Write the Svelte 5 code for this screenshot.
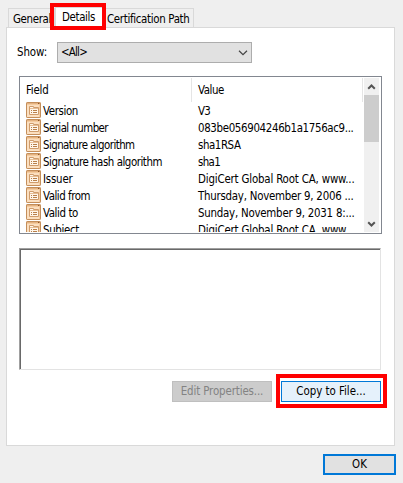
<script>
  const rows = [
    ['Version', 35, 'V3', 12],
    ['Serial number', 65, '083be056904246b1a1756ac9...', 155.5],
    ['Signature algorithm', 91.5, 'sha1RSA', 42.5],
    ['Signature hash algorithm', 119, 'sha1', 22],
    ['Issuer', 29.5, 'DigiCert Global Root CA, www...', 156.5],
    ['Valid from', 47, 'Thursday, November 9, 2006 ...', 155.5],
    ['Valid to', 35, 'Sunday, November 9, 2031 8:...', 156.5],
    ['Subject', 36, 'DigiCert Global Root CA, www...', 156.5]
  ];

  // Tracks a label so that it fills the given width.
  function fit(node, width) {
    node.style.letterSpacing = '0px';
    const natural = node.getBoundingClientRect().width;
    node.style.letterSpacing = (width - natural) / node.textContent.length + 'px';
  }
</script>

<main>
  <nav>
    <button class="tab general"><span use:fit={38}>General</span></button>
    <button class="tab active"><span use:fit={33}>Details</span><i class="mark"></i></button>
    <button class="tab path"><span use:fit={82.5}>Certification Path</span></button>
  </nav>
  <section>
    <div class="show">
      <div class="label"><span use:fit={30}>Show:</span></div>
      <div class="select">
        <span use:fit={26}>&lt;All&gt;</span>
        <svg width="10" height="6" viewBox="0 0 10 6"><path d="M1 .8 5 4.6 9 .8" fill="none" stroke="#444" stroke-width="1.2" /></svg>
      </div>
    </div>
    <div class="list">
      <div class="table">
        <div class="head"><div><span use:fit={22.5}>Field</span></div><div><span use:fit={26}>Value</span></div></div>
        {#each rows as [field, fieldWidth, value, valueWidth]}
          <div class="row">
            <svg width="15" height="16" viewBox="0 0 15 16">
              <rect x=".5" y=".5" width="14" height="15" rx=".6" fill="#fbdfc0" stroke="#c48e5a" />
              <path d="M1 1.5H14" stroke="#e3b281" />
              <path d="M1 2.5H14M13.5 3V15" stroke="#f5cb9e" />
              <path d="M12 1.5h1.4" stroke="#8f5628" />
              <path d="M3.5 12.5v-8h4v1h5v7z" fill="#fff6ea" stroke="#cf9c6c" />
              <path d="M4 6.5h8" stroke="#e6bd94" />
              <path d="M5 8.5h1M7 8.5h4M5 10.5h1M7 10.5h4" stroke="#b87f4a" />
            </svg>
            <div class="field"><span use:fit={fieldWidth}>{field}</span></div>
            <div class="value"><span use:fit={valueWidth}>{value}</span></div>
          </div>
        {/each}
      </div>
      <div class="scroll">
        <svg width="15" height="17" viewBox="0 0 15 17"><path d="M4.2 10.8 7.5 7.5l3.3 3.3" fill="none" stroke="#555" stroke-width="2" /></svg>
        <div class="thumb"></div>
        <svg class="down" width="15" height="17" viewBox="0 0 15 17"><path d="M4.2 7.2 7.5 10.5l3.3-3.3" fill="none" stroke="#555" stroke-width="2" /></svg>
      </div>
    </div>
    <div class="text"></div>
    <div class="actions">
      <button class="edit" disabled><span use:fit={82.5}>Edit Properties...</span></button>
      <button class="copy"><span use:fit={69.5}>Copy to File...</span><i class="mark"></i></button>
    </div>
  </section>
  <footer><button class="ok"><span use:fit={15}>OK</span></button></footer>
</main>

<style>
  :global(body) { margin: 0; }
  main {
    box-sizing: border-box; width: 403px; height: 483px; padding: 7px 8px 0 6px;
    background: #efefef; color: #000; overflow: hidden;
    font: 11.4px/15px "DejaVu Sans Condensed", "DejaVu Sans", sans-serif;
    font-stretch: condensed;
  }
  span { white-space: nowrap; }
  button { box-sizing: border-box; padding: 0; margin: 0; font: inherit; color: inherit; position: relative; white-space: nowrap; }
  nav { display: flex; align-items: flex-end; height: 21px; padding-left: 2px; position: relative; z-index: 1; }
  .tab { height: 19px; border: 1px solid #d9d9d9; border-bottom: 0; background: #efefef; text-align: left; margin-bottom: 1px; padding-top: 2px; }
  .general { width: 47px; padding-left: 4px; }
  .active { width: 49px; height: 21px; margin: 0; padding: 0 0 1px 6px; background: #fff; z-index: 2; }
  .path { width: 90px; padding-left: 2px; }
  .mark { position: absolute; border: 4px solid #f00; pointer-events: none; }
  .active .mark { left: -6px; top: -5px; width: 48px; height: 19px; }
  section { box-sizing: border-box; width: 389px; height: 419px; margin-top: -1px; border: 1px solid #d9d9d9; background: #fff; padding: 14px 12px 0; }
  .show { display: flex; height: 21px; align-items: center; }
  .label { width: 40px; margin: -1px 0 0 -2px; }
  .select { box-sizing: border-box; width: 195px; height: 21px; border: 1px solid #adadad; background: #e1e1e1; display: flex; align-items: center; justify-content: space-between; padding: 0 3px 0 3px; }
  .list { box-sizing: border-box; width: 363px; height: 158px; margin-top: 13px; border: 1px solid #828790; padding: 1px; display: flex; justify-content: space-between; overflow: hidden; }
  .table { width: 342px; height: 154px; overflow: hidden; }
  .head { display: flex; height: 24px; }
  .head div { box-sizing: border-box; width: 171px; border-right: 1px solid #e5e5e5; padding: 5px 0 0 5px; }
  .head div + div { padding-left: 6px; }
  .row { display: flex; height: 17px; white-space: nowrap; }
  .row svg { margin-left: 5px; flex: none; }
  .field, .value { padding-top: 2px; height: 15px; }
  .field { box-sizing: border-box; width: 156px; margin-left: 1px; padding-left: 1px; flex: none; }
  .scroll { width: 15px; height: 154px; background: #f0f0f0; display: flex; flex-direction: column; margin-right: 1px; }
  .scroll svg { display: block; }
  .thumb { height: 47px; background: #cdcdcd; }
  .down { margin-top: auto; }
  .text { box-sizing: border-box; width: 362px; height: 122px; margin-top: 14px; border: 1px solid; border-color: #a0a0a0 #e3e3e3 #e3e3e3 #a0a0a0; box-shadow: inset 1px 1px #696969; }
  .actions { display: flex; gap: 9px; margin: 11px 0 0 153px; }
  .actions button { width: 100px; height: 21px; }
  .edit { border: 1px solid #bfbfbf; background: #ccc; color: #838383; }
  .copy { border: 1px solid #0078d7; background: #e5f1fb; }
  .copy .mark { left: -6px; top: -8px; width: 103px; height: 26px; }
  footer { display: flex; justify-content: flex-end; padding-top: 8px; }
  .ok { width: 73px; height: 21px; border: 2px solid #0078d7; background: #e1e1e1; margin-right: -1px; }
</style>
